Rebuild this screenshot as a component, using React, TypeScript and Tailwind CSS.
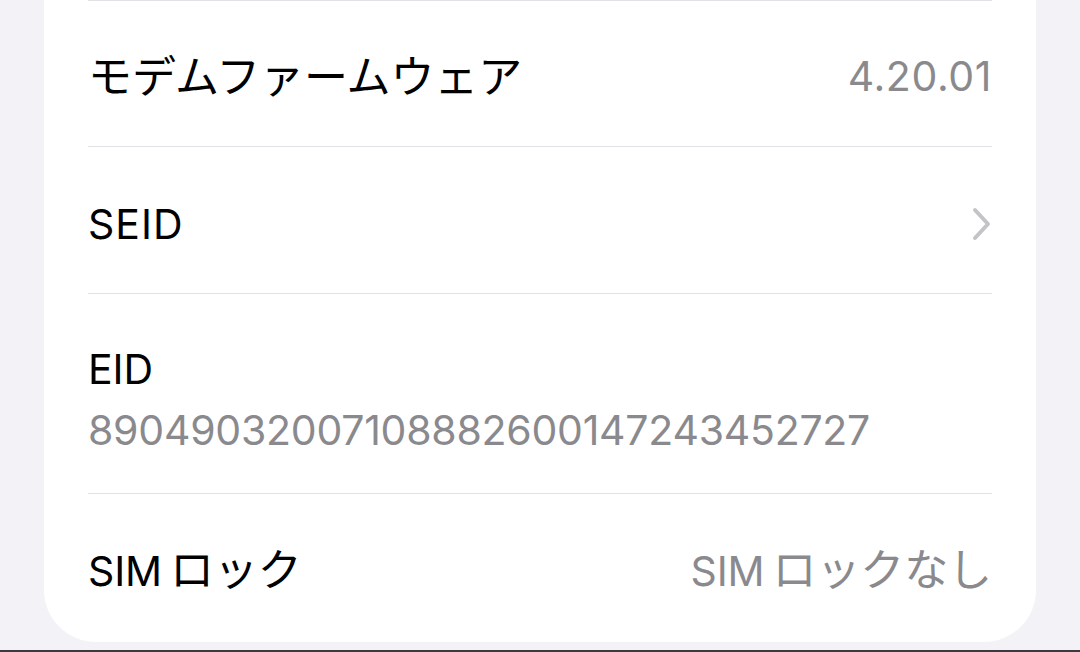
const font = { fontFamily: "Inter, 'Noto Sans CJK JP', sans-serif" }

function Ja({ children, className = "" }: { children: string; className?: string }) {
  return <span className={`text-[44px] ${className}`}>{children}</span>
}

function Chevron() {
  return (
    <svg width="20" height="36" viewBox="0 0 20 36" className="mr-[1px]">
      <path d="M4 4 L17 18 L4 32" fill="none" stroke="#c4c4c7" strokeWidth="4" strokeLinecap="round" strokeLinejoin="round" />
    </svg>
  )
}

export default function App() {
  return (
    <div className="h-[652px] w-full overflow-hidden bg-[#f2f2f7]" style={font}>
      <div className="flex h-[650px] flex-col">
        <div className="mx-[44px] h-[642px] rounded-b-[52px] bg-white px-[44px] text-[41px] leading-none tracking-[-0.1px]">
          <div className="border-t-[1.5px] border-[#e2e2e6]" />
          <div className="flex h-[146px] items-center justify-between border-b-[1.5px] border-[#e2e2e6] pt-[6px]">
            <Ja className="text-black">モデムファームウェア</Ja>
            <span className="tracking-[0.6px] text-[#8a8a8e]">4.20.01</span>
          </div>
          <div className="flex h-[147px] items-center justify-between border-b-[1.5px] border-[#e2e2e6] pt-[8px]">
            <span className="tracking-[1px] text-black">SEID</span>
            <Chevron />
          </div>
          <div className="flex h-[200px] flex-col justify-center gap-[20px] border-b-[1.5px] border-[#e2e2e6] pt-[12px]">
            <span className="text-black">EID</span>
            <span className="tracking-[-0.25px] text-[#8a8a8e]">89049032007108882600147243452727</span>
          </div>
          <div className="flex h-[146px] items-center justify-between pt-[6px]">
            <span className="text-black">
              SIM<Ja className="ml-[8px]">ロック</Ja>
            </span>
            <span className="text-[#8a8a8e]">
              SIM<Ja className="ml-[8px]">ロックなし</Ja>
            </span>
          </div>
        </div>
      </div>
      <div className="h-[2px] bg-[#3a3a3e]" />
    </div>
  )
}
